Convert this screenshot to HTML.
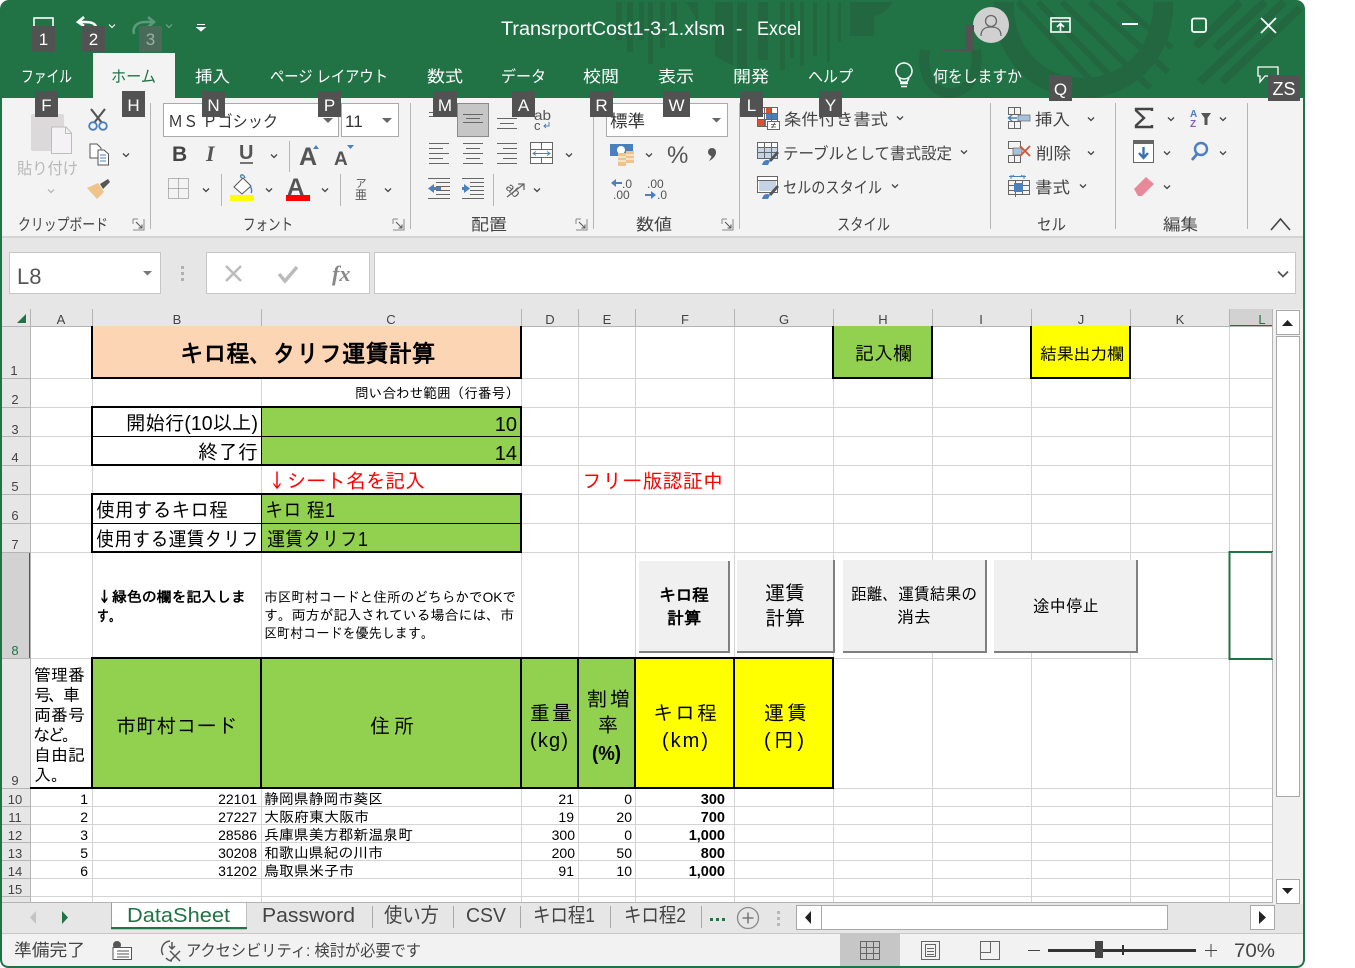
<!DOCTYPE html>
<html lang="ja"><head><meta charset="utf-8"><title>TransrportCost1-3-1.xlsm - Excel</title>
<style>
html,body{margin:0;padding:0;background:#fff;width:1355px;height:968px;overflow:hidden}
svg{display:block;position:absolute;left:0;top:0}
text{white-space:pre}
.u{font-family:"Liberation Sans","Noto Sans CJK JP",sans-serif}
.g{font-family:"Liberation Sans","IPAGothic",sans-serif}
.ar{font-family:"IPAGothic","Liberation Sans",sans-serif}
.tb{font-size:16px;fill:#fff}
.rb{font-size:16px;fill:#444}
.gl{font-size:16px;fill:#444}
.k{font-size:17px;fill:#fff;text-anchor:middle}
.ch{font-size:13px;fill:#444;text-anchor:middle}
.rh{font-size:13px;fill:#444;text-anchor:middle}
.c{fill:#000}
.n{font-size:14px}
.v{stroke:#666;stroke-width:1;fill:none;shape-rendering:crispEdges}
</style></head><body>
<svg width="1355" height="968" viewBox="0 0 1355 968" xmlns="http://www.w3.org/2000/svg">
<defs>
<path id="cv" d="M-3-1.5L0 1.5L3-1.5" fill="none" stroke="#444" stroke-width="1.3"/>
<path id="cw" d="M-3-1.5L0 1.5L3-1.5" fill="none" stroke="#fff" stroke-width="1"/>
<g id="ex"><path d="M-6-6V-1M-6-6H-1M-6 5H5V-6" fill="none" stroke="#888"/><path d="M-3-3L3 3M3-.5V3H-.5" fill="none" stroke="#555"/></g>
</defs>
<!-- window -->
<rect x="0" y="0" width="1305" height="968" rx="9" fill="#217346"/>
<!-- title bar pattern -->
<g fill="#22673f">
<rect x="616" y="2" width="6" height="38"/><rect x="627" y="2" width="6" height="50"/><rect x="639" y="2" width="5" height="38"/><rect x="648" y="2" width="5" height="62"/><rect x="660" y="2" width="5" height="46"/><rect x="671" y="2" width="6" height="28"/>
<path d="M686 2H698V22Z"/><path d="M715 2H733V66L715 56Z"/><rect x="737" y="2" width="10" height="68"/><rect x="758" y="2" width="10" height="58"/><rect x="780" y="2" width="5" height="68"/><rect x="790" y="2" width="4" height="56"/><rect x="800" y="2" width="4" height="64"/><rect x="813" y="2" width="4" height="54"/><rect x="827" y="2" width="3" height="60"/><rect x="838" y="2" width="3" height="40"/>
</g>
<g fill="none" stroke="#22673f">
<path d="M1004 2C1002 50 1035 88 1084 88C1130 88 1165 50 1163 2" stroke-width="20"/>
<path d="M925 50C921 78 935 93 950 93C965 93 980 78 976 50" stroke-width="10"/>
<path d="M1018 2L1098 88M1038 2L1122 88M1062 2L1150 88M1090 2L1168 72M1118 2L1172 48" stroke-width="6"/>
<path d="M1196 46L1240 2M1215 48L1265 2M1200 82L1284 2M1222 82L1300 8" stroke-width="8"/>
</g>
<rect x="850" y="2" width="115" height="47" fill="#217346"/>
<path d="M850 2H892C888 12 878 16 874 16V36H850Z" fill="#22673f"/>
<!-- tabs / title -->
<text class="u" x="501" y="35" font-size="19" fill="#fff" textLength="224" lengthAdjust="spacingAndGlyphs">TransrportCost1-3-1.xlsm</text>
<text class="u" x="736" y="35" font-size="19" fill="#fff">-</text>
<text class="u" x="757" y="35" font-size="19" fill="#fff" textLength="44" lengthAdjust="spacingAndGlyphs">Excel</text>
<g class="u tb">
<text x="21" y="82" textLength="51" lengthAdjust="spacingAndGlyphs">ファイル</text>
<text x="195" y="82" textLength="35" lengthAdjust="spacingAndGlyphs">挿入</text>
<text x="270" y="82" textLength="118" lengthAdjust="spacingAndGlyphs">ページ レイアウト</text>
<text x="427" y="82" textLength="36" lengthAdjust="spacingAndGlyphs">数式</text>
<text x="501" y="82" textLength="45" lengthAdjust="spacingAndGlyphs">データ</text>
<text x="583" y="82" textLength="36" lengthAdjust="spacingAndGlyphs">校閲</text>
<text x="658" y="82" textLength="36" lengthAdjust="spacingAndGlyphs">表示</text>
<text x="733" y="82" textLength="36" lengthAdjust="spacingAndGlyphs">開発</text>
<text x="808" y="82" textLength="45" lengthAdjust="spacingAndGlyphs">ヘルプ</text>
<text x="933" y="82" textLength="89" lengthAdjust="spacingAndGlyphs">何をしますか</text>
</g>
<!-- QAT icons -->
<rect x="34" y="18" width="19" height="12" fill="none" stroke="#fff" stroke-width="1.6"/>
<path d="M96 28C96 23 91 22 85 22H79M84 17L78 22L84 26" fill="none" stroke="#fff" stroke-width="2.6"/>
<use href="#cw" x="112" y="26"/>
<path d="M134 34C132 26 138 22 145 22H153M148 17L154 22L148 27" fill="none" stroke="#5c9a7a" stroke-width="2.6"/>
<use href="#cw" x="169" y="26" opacity=".4"/>
<path d="M197 24.5H205M197 27.5H205L201 31Z" fill="#fff" stroke="#fff" stroke-width="1"/>
<!-- window controls -->
<circle cx="991" cy="25" r="18" fill="#d0d0d0"/><circle cx="991" cy="21" r="5.5" fill="none" stroke="#666" stroke-width="1.3"/><path d="M981 36C981 29 985 27 991 27C997 27 1001 29 1001 36" fill="none" stroke="#666" stroke-width="1.3"/>
<rect x="1051" y="18" width="19" height="14" fill="none" stroke="#fff" stroke-width="1.6"/><path d="M1051 21.5H1070M1060.5 31V24M1057 27L1060.5 23.5L1064 27" fill="none" stroke="#fff" stroke-width="1.6"/>
<path d="M1122 24H1138" stroke="#fff" stroke-width="2"/>
<rect x="1192" y="18.5" width="14" height="13.5" rx="2" fill="none" stroke="#fff" stroke-width="1.8"/>
<path d="M1261 18L1276 33M1276 18L1261 33" stroke="#fff" stroke-width="1.7"/>
<circle cx="904" cy="71" r="8" fill="none" stroke="#fff" stroke-width="1.5"/><path d="M899 78L901 82H907L909 78M900 83.5H908M901 86.5H907" fill="none" stroke="#fff" stroke-width="1.5"/>
<path d="M1258 67H1278V76H1265L1260 82V76H1258Z" fill="none" stroke="#fff" stroke-width="1.3"/>
<!-- ribbon -->
<rect x="2" y="98" width="1301" height="138" fill="#f3f3f3"/>
<rect x="93" y="53" width="82" height="46" fill="#f3f3f3"/>
<text class="u" x="111" y="82" font-size="16" fill="#217346" textLength="45" lengthAdjust="spacingAndGlyphs">ホーム</text>
<rect x="2" y="236" width="1301" height="2" fill="#d4d4d4"/>
<g class="v" style="stroke:#b5b5b5"><path d="M150.500 103V229M410.500 103V229M593.500 103V229M739.500 103V229M990.500 103V229M1115.500 103V229M1247.500 103V229"/>
<path d="M289.500 141V172M221.500 174V206M340.500 174V206M493.500 174V206"/></g>
<!-- clipboard -->
<rect x="31" y="114" width="33" height="37" rx="2" fill="#dcd9da"/>
<path d="M51.500 127H66L71.500 133V153.500H51.500Z" fill="#f5f2f5" stroke="#bdbdbd"/><path d="M65.500 127V133.500H71.500" fill="none" stroke="#bdbdbd"/>
<text class="u" x="17" y="174" font-size="16" fill="#b8b8b8" textLength="61" lengthAdjust="spacingAndGlyphs">貼り付け</text>
<use href="#cv" x="51" y="191" opacity=".35"/>
<path d="M91 109L102 123M105 109L94 123" stroke="#555" stroke-width="2.2"/>
<circle cx="93" cy="126" r="3.8" fill="none" stroke="#4a80bd" stroke-width="1.8"/><circle cx="103" cy="126" r="3.8" fill="none" stroke="#4a80bd" stroke-width="1.8"/>
<path d="M90 144H97L101 148V158H90Z" fill="#fff" stroke="#555"/><path d="M98 150H104L108.500 154V165H98Z" fill="#fff" stroke="#555"/><path d="M100 155H106M100 158H106M100 161H106" stroke="#4a80bd"/>
<use href="#cv" x="126" y="155"/>
<path d="M87 188L98 183L104 192L97 199Z" fill="#eec48b"/><path d="M100 184L108 179L110 182L103 189Z" fill="#555"/>
<text class="u gl" x="18" y="230" textLength="90" lengthAdjust="spacingAndGlyphs">クリップボード</text>
<use href="#ex" x="139" y="225"/>
<!-- font -->
<rect x="163.500" y="103.500" width="175" height="33" fill="#fff" stroke="#aaa"/><rect x="341.500" y="103.500" width="57" height="33" fill="#fff" stroke="#aaa"/>
<text class="u" x="168" y="127" font-size="16" fill="#333" textLength="110" lengthAdjust="spacingAndGlyphs">ＭＳ Ｐゴシック</text>
<path d="M323 118H333L328 123Z" fill="#666"/><path d="M382 118H392L387 123Z" fill="#666"/>
<text class="u" x="345" y="127" font-size="17" fill="#333">11</text>
<text x="172" y="161" font-family="Liberation Sans,sans-serif" font-weight="700" font-size="21" fill="#444">B</text>
<text x="206" y="161" font-family="Liberation Serif,serif" font-style="italic" font-weight="700" font-size="22" fill="#555">I</text>
<text x="239" y="159" font-family="Liberation Sans,sans-serif" font-weight="700" font-size="20" fill="#555">U</text><path d="M240 163H253" stroke="#555" stroke-width="1.600"/>
<use href="#cv" x="274" y="156"/>
<text x="299" y="165" font-family="Liberation Sans,sans-serif" font-weight="700" font-size="25" fill="#555">A</text><path d="M313 149L319 149L316 145Z" fill="#4a80bd"/>
<text x="334" y="165" font-family="Liberation Sans,sans-serif" font-weight="700" font-size="19" fill="#555">A</text><path d="M347 145H354L350.500 149Z" fill="#4a80bd"/>
<path d="M168.500 178.500H188.500V198.500H168.500ZM178.500 178.500V198.500M168.500 188.500H188.500" fill="none" stroke="#777" stroke-dasharray="1 1" shape-rendering="crispEdges"/>
<use href="#cv" x="206" y="190"/>
<path d="M234 187L243 178L251 186L242 194Z" fill="#fff" stroke="#555"/><path d="M242 178C238 176 243 172 245 178M250 186C252 189 252 192 251 193" fill="none" stroke="#4a80bd" stroke-width="1.400"/>
<rect x="230" y="195" width="24" height="6" fill="#ff0"/>
<use href="#cv" x="269" y="190"/>
<text x="287" y="195" font-family="Liberation Sans,sans-serif" font-weight="700" font-size="24" fill="#555">A</text>
<rect x="286" y="195" width="24" height="6" fill="#f00"/>
<use href="#cv" x="325" y="190"/>
<text class="u" x="361" y="187" font-size="11" fill="#555" text-anchor="middle">ア</text><text class="u" x="361" y="199" font-size="12" fill="#555" text-anchor="middle">亜</text>
<use href="#cv" x="388" y="190"/>
<text class="u gl" x="243" y="230" textLength="50" lengthAdjust="spacingAndGlyphs">フォント</text>
<use href="#ex" x="399" y="225"/>
<!-- alignment -->
<path class="v" d="M429 112.500H434M429 116.500H434"/>
<rect x="457.500" y="103.500" width="31" height="33" fill="#c6c6c6" stroke="#8a8a8a"/>
<path class="v" d="M463 114.500H483M466 118.500H480M463 122.500H483"/>
<path class="v" d="M497 118.500H517M500 123.500H514M497 128.500H517"/>
<text class="u" x="534" y="120" font-size="14" fill="#555" textLength="17" lengthAdjust="spacingAndGlyphs">ab</text><text class="u" x="534" y="130" font-size="13" fill="#555">c</text>
<path d="M549 122V126H544M546 124L544 126L546 128" fill="none" stroke="#4a80bd"/>
<path class="v" d="M429 143.500H449M429 148.500H443M429 153.500H449M429 158.500H443M429 163.500H449"/>
<path class="v" d="M463 143.500H483M466 148.500H480M463 153.500H483M466 158.500H480M463 163.500H483"/>
<path class="v" d="M497 143.500H517M503 148.500H517M497 153.500H517M503 158.500H517M497 163.500H517"/>
<rect x="530.500" y="142.500" width="22" height="21" fill="#fff" stroke="#666"/><path class="v" d="M530 149.500H553M530 157.500H553M541.500 142V149M541.500 158V164"/><path d="M533 153.500H550M536 151.500L533 153.500L536 155.500M547 151.500L550 153.500L547 155.500" fill="none" stroke="#4a80bd"/>
<use href="#cv" x="569" y="155"/>
<path class="v" d="M428 178.500H450M436 182.500H450M436 186.500H450M436 190.500H450M436 194.500H450M428 198.500H450"/>
<path d="M428 188.500L434 184V187H441V190H434V193Z" fill="#4a80bd"/>
<path class="v" d="M462 178.500H484M470 182.500H484M470 186.500H484M470 190.500H484M470 194.500H484M462 198.500H484"/>
<path d="M470 188.500L464 184V187H462V190H464V193Z" fill="#4a80bd"/>
<text class="u" font-size="13" fill="#555" transform="translate(508,191) rotate(45)" x="-4" y="0">ab</text>
<path d="M507 197L524 184M518 184H524V190" fill="none" stroke="#666" stroke-width="1.300"/>
<use href="#cv" x="537" y="190"/>
<text class="u gl" x="471" y="230" textLength="36" lengthAdjust="spacingAndGlyphs">配置</text>
<use href="#ex" x="582" y="225"/>
<!-- number -->
<rect x="606.500" y="103.500" width="121" height="33" fill="#fff" stroke="#aaa"/>
<text class="u" x="610" y="127" font-size="17" fill="#333" textLength="35" lengthAdjust="spacingAndGlyphs">標準</text>
<path d="M712 118H721L716.500 122.500Z" fill="#666"/>
<rect x="610" y="144" width="23" height="12" fill="#4a80bd"/><circle cx="621" cy="150" r="4" fill="#fff"/>
<rect x="618" y="153" width="8" height="13" fill="#eec48b"/><rect x="626" y="151" width="8" height="12" fill="#eec48b"/><path d="M618 157H626M618 161H626M626 155H634M626 159H634" stroke="#fff"/>
<use href="#cv" x="649" y="155"/>
<text x="667" y="163" font-family="Liberation Sans,sans-serif" font-size="24" fill="#555">%</text>
<circle cx="712" cy="152" r="4" fill="#555"/><path d="M716 152C716 156 713 159 709 161C711 158 712 156 711 155Z" fill="#555"/>
<path d="M611 183L616 179V182H622V184H616V187Z" fill="#4a80bd"/>
<text class="u" x="622" y="188" font-size="12" fill="#555">.0</text><text class="u" x="613" y="199" font-size="12" fill="#555">.00</text>
<text class="u" x="647" y="188" font-size="12" fill="#555">.00</text>
<path d="M656 195L651 191V194H645V196H651V199Z" fill="#4a80bd"/>
<text class="u" x="657" y="199" font-size="12" fill="#555">.0</text>
<text class="u gl" x="636" y="230" textLength="36" lengthAdjust="spacingAndGlyphs">数値</text>
<use href="#ex" x="728" y="225"/>
<!-- styles -->
<rect x="757.500" y="107.500" width="20" height="19" fill="#fff" stroke="#666"/><rect x="766" y="108" width="5" height="6" fill="#d4552f"/><rect x="766" y="114" width="11" height="5" fill="#4a80bd"/><rect x="758" y="120" width="8" height="6" fill="#d4552f"/><path class="v" d="M764.500 107V127M771.500 107V127M757 113.500H778M757 119.500H778"/>
<rect x="767.500" y="121.500" width="12" height="8" fill="#fff" stroke="#666"/><path d="M771 124.500H776M771 127H776M775 122.500L772 128" stroke="#555" fill="none" stroke-width=".8"/>
<text class="u rb" x="784" y="125" textLength="104" lengthAdjust="spacingAndGlyphs">条件付き書式</text><use href="#cv" x="900" y="118"/>
<rect x="757.500" y="142.500" width="20" height="16" fill="#fff" stroke="#666"/><rect x="758" y="147" width="19" height="11" fill="#c4d4e6"/><path class="v" d="M764.500 142V158M771.500 142V158M757 147.500H778M757 152.500H778"/>
<path d="M769 160L777 151L779 153L771 162Z" fill="#555"/><path d="M762 165C763 160 767 159 770 161L768 165Z" fill="#4a80bd"/>
<text class="u rb" x="783" y="159" textLength="169" lengthAdjust="spacingAndGlyphs">テーブルとして書式設定</text><use href="#cv" x="964" y="152"/>
<rect x="757.500" y="176.500" width="20" height="16" fill="#fff" stroke="#666"/><rect x="759" y="181" width="17" height="10" fill="#c4d4e6"/><path class="v" d="M757 180.500H778"/>
<path d="M769 194L777 185L779 187L771 196Z" fill="#555"/><path d="M762 199C763 194 767 193 770 195L768 199Z" fill="#4a80bd"/>
<text class="u rb" x="783" y="193" textLength="99" lengthAdjust="spacingAndGlyphs">セルのスタイル</text><use href="#cv" x="895" y="186"/>
<text class="u gl" x="837" y="230" textLength="53" lengthAdjust="spacingAndGlyphs">スタイル</text>
<!-- cells -->
<path class="v" d="M1008.500 107.500H1020.500V114.500H1008.500ZM1014.500 107V114M1008.500 121.500H1020.500V128.500H1008.500ZM1014.500 122V128"/><rect x="1018" y="115" width="12" height="6" fill="#a9c2dc" stroke="#666" stroke-width=".7"/><path d="M1008 118H1017M1012 115L1008.500 118L1012 121" fill="none" stroke="#4a80bd" stroke-width="1.400"/>
<text class="u rb" x="1035" y="125" textLength="35" lengthAdjust="spacingAndGlyphs">挿入</text><use href="#cv" x="1091" y="119"/>
<path class="v" d="M1008.500 141.500H1020.500V148.500H1008.500ZM1008.500 155.500H1020.500V162.500H1008.500ZM1014.500 155V162"/><rect x="1013" y="148" width="9" height="7" fill="#a9c2dc" stroke="#666" stroke-width=".7"/><path d="M1020 146L1030 156M1030 146L1020 156" stroke="#d4552f" stroke-width="1.800"/>
<text class="u rb" x="1036" y="159" textLength="35" lengthAdjust="spacingAndGlyphs">削除</text><use href="#cv" x="1091" y="153"/>
<path d="M1009 176.500H1026M1011 175V179M1024 175V179M1012 176.500L1014 175M1023 176.500L1021 175" fill="none" stroke="#4a80bd"/>
<path class="v" d="M1008.500 180.500H1029.500V194.500H1008.500ZM1015.500 180V197M1022.500 180V194M1008 185.500H1030M1008 190.500H1030"/><rect x="1014" y="183" width="9" height="9" fill="#4a80bd"/>
<text class="u rb" x="1035" y="193" textLength="35" lengthAdjust="spacingAndGlyphs">書式</text><use href="#cv" x="1083" y="186"/>
<text class="u gl" x="1037" y="230" textLength="29" lengthAdjust="spacingAndGlyphs">セル</text>
<!-- editing -->
<path d="M1152 111V109H1136V110.500L1144 118L1136 125.500V127H1152V125" fill="none" stroke="#444" stroke-width="2.400"/>
<use href="#cv" x="1171" y="119"/>
<text x="1190" y="117" font-family="Liberation Sans,sans-serif" font-size="10" font-weight="700" fill="#4a80bd">A</text><text x="1190" y="127" font-family="Liberation Sans,sans-serif" font-size="10" font-weight="700" fill="#8a5fb5">Z</text>
<path d="M1201 113H1211L1207.500 118V125H1204.500V118Z" fill="#555"/>
<use href="#cv" x="1223" y="119"/>
<rect x="1133.500" y="140.500" width="20" height="22" fill="#fff" stroke="#666"/><rect x="1133" y="140" width="21" height="4" fill="#666"/><path d="M1143.500 147V158M1139 153L1143.500 158L1148 153" fill="none" stroke="#3a70b0" stroke-width="2.400"/>
<use href="#cv" x="1167" y="153"/>
<circle cx="1201" cy="149" r="6" fill="none" stroke="#4a80bd" stroke-width="2.400"/><path d="M1197 154L1192 160" stroke="#4a80bd" stroke-width="2.800"/>
<use href="#cv" x="1223" y="153"/>
<path d="M1134 189L1146 177L1154 184L1142 196L1138 196Z" fill="#e8899a"/><use href="#cv" x="1167" y="187"/>
<text class="u gl" x="1163" y="230" textLength="35" lengthAdjust="spacingAndGlyphs">編集</text>
<path d="M1271 230L1280.500 219L1290 230" fill="none" stroke="#444" stroke-width="1.600"/>
<!-- formula bar -->
<rect x="2" y="238" width="1301" height="71" fill="#e6e6e6"/>
<rect x="9.500" y="252.500" width="151" height="41" fill="#fff" stroke="#c6c6c6"/>
<text class="u" x="17" y="284" font-size="22" fill="#555">L8</text>
<path d="M143 271H152L147.500 275.500Z" fill="#777"/>
<path d="M181 266H184V269H181ZM181 272H184V275H181ZM181 278H184V281H181Z" fill="#b0b0b0"/>
<rect x="206.500" y="252.500" width="163" height="41" fill="#fff" stroke="#c6c6c6"/>
<path d="M226 266L241 281M241 266L226 281" stroke="#bbb" stroke-width="2.500"/>
<path d="M279 274L285 281L297 267" fill="none" stroke="#bbb" stroke-width="3.500"/>
<text x="332" y="281" font-family="Liberation Serif,serif" font-style="italic" font-weight="700" font-size="22" fill="#888">fx</text>
<rect x="374.500" y="252.500" width="921" height="41" fill="#fff" stroke="#c6c6c6"/>
<path d="M1278 271.500L1283 276.500L1288 271.500" fill="none" stroke="#555" stroke-width="1.800"/>
<!-- grid -->
<rect x="30" y="326" width="1243" height="576" fill="#fff"/>
<rect x="2" y="309" width="1271" height="17" fill="#e6e6e6"/>
<rect x="2" y="326" width="28" height="576" fill="#e6e6e6"/>
<rect x="1229" y="309" width="44" height="17" fill="#d2d2d2"/><rect x="1229" y="325" width="44" height="2" fill="#217346"/>
<rect x="2" y="552" width="28" height="106" fill="#d2d2d2"/><rect x="29" y="552" width="2" height="107" fill="#217346"/>
<path d="M26 314V323H17Z" fill="#217346"/>
<path d="M30 378.500H1272M30 407.500H1272M30 436.500H1272M30 465.500H1272M30 494.500H1272M30 523.500H1272M30 552.500H1272M30 658.500H1272M30 788.500H1272M30 806.500H1272M30 824.500H1272M30 842.500H1272M30 860.500H1272M30 878.500H1272M30 896.500H1272M92.500 326V902M261.500 326V902M521.500 326V902M578.500 326V902M635.500 326V902M734.500 326V902M833.500 326V902M932.500 326V902M1031.500 326V902M1130.500 326V902M1229.500 326V902" stroke="#d4d4d4" fill="none" shape-rendering="crispEdges"/>
<path d="M2 378.500H30M2 407.500H30M2 436.500H30M2 465.500H30M2 494.500H30M2 523.500H30M2 552.500H30M2 658.500H30M2 788.500H30M2 806.500H30M2 824.500H30M2 842.500H30M2 860.500H30M2 878.500H30M2 896.500H30M30.500 309V902M92.500 309V326M261.500 309V326M521.500 309V326M578.500 309V326M635.500 309V326M734.500 309V326M833.500 309V326M932.500 309V326M1031.500 309V326M1130.500 309V326M1229.500 309V326M2 326.500H1272M1272.500 309V902M2 902.500H1273" stroke="#b4b4b4" fill="none" shape-rendering="crispEdges"/>
<g class="g ch">
<text x="61" y="324">A</text><text x="177" y="324">B</text><text x="391" y="324">C</text><text x="550" y="324">D</text><text x="607" y="324">E</text><text x="685" y="324">F</text><text x="784" y="324">G</text><text x="883" y="324">H</text><text x="981" y="324">I</text><text x="1081" y="324">J</text><text x="1180" y="324">K</text><text x="1262" y="324" style="fill:#217346">L</text>
</g>
<g class="g rh">
<text x="14" y="375">1</text><text x="15" y="404">2</text><text x="15" y="434">3</text><text x="15" y="462">4</text><text x="15" y="491">5</text><text x="15" y="520">6</text><text x="15" y="549">7</text><text x="15" y="655" style="fill:#217346">8</text><text x="15" y="785">9</text>
<text x="15" y="804">10</text><text x="15" y="822">11</text><text x="15" y="840">12</text><text x="15" y="858">13</text><text x="15" y="876">14</text><text x="15" y="894">15</text>
</g>
<!-- filled cells -->
<rect x="92" y="326" width="429" height="52" fill="#fcd5b4"/>
<rect x="833" y="326" width="99" height="52" fill="#92d050"/>
<rect x="1031" y="326" width="99" height="52" fill="#ff0"/>
<rect x="262" y="407" width="259" height="58" fill="#92d050"/>
<rect x="262" y="494" width="259" height="58" fill="#92d050"/>
<rect x="92" y="658" width="543" height="130" fill="#92d050"/>
<rect x="635" y="658" width="198" height="130" fill="#ff0"/>
<g fill="#000" shape-rendering="crispEdges">
<rect x="91" y="326" width="2" height="53"/><rect x="520" y="326" width="2" height="53"/><rect x="91" y="377" width="431" height="2"/>
<rect x="832" y="326" width="2" height="53"/><rect x="931" y="326" width="2" height="53"/><rect x="832" y="377" width="101" height="2"/>
<rect x="1030" y="326" width="2" height="53"/><rect x="1129" y="326" width="2" height="53"/><rect x="1030" y="377" width="101" height="2"/>
<rect x="91" y="406" width="431" height="2"/><rect x="91" y="464" width="431" height="2"/><rect x="91" y="406" width="2" height="60"/><rect x="520" y="406" width="2" height="60"/><rect x="93" y="436" width="427" height="1"/><rect x="261" y="408" width="1" height="56"/>
<rect x="91" y="493" width="431" height="2"/><rect x="91" y="551" width="431" height="2"/><rect x="91" y="493" width="2" height="60"/><rect x="520" y="493" width="2" height="60"/><rect x="93" y="523" width="427" height="1"/><rect x="261" y="495" width="1" height="56"/>
<rect x="91" y="657" width="743" height="2"/><rect x="91" y="787" width="743" height="2"/>
<rect x="91" y="657" width="2" height="132"/><rect x="260" y="657" width="2" height="132"/><rect x="520" y="657" width="2" height="132"/><rect x="577" y="657" width="2" height="132"/><rect x="634" y="657" width="2" height="132"/><rect x="733" y="657" width="2" height="132"/><rect x="832" y="657" width="2" height="132"/>
<rect x="30" y="787" width="62" height="2"/>
</g>
<!-- selection -->
<rect x="1229.500" y="552" width="43" height="107" fill="none" stroke="#217346" stroke-width="2"/>
<rect x="1272" y="552" width="1" height="107" fill="#b4b4b4"/>
<!-- cell text -->
<g class="g c">
<text x="180" y="362" font-size="24" font-weight="700" textLength="255" lengthAdjust="spacingAndGlyphs">キロ程、タリフ運賃計算</text>
<text x="355" y="398" font-size="14" textLength="164" lengthAdjust="spacingAndGlyphs">問い合わせ範囲（行番号）</text>
<text x="126" y="430" font-size="20" textLength="132" lengthAdjust="spacingAndGlyphs">開始行(10以上)</text>
<text x="517" y="431" font-size="20" text-anchor="end">10</text>
<text x="198" y="459" font-size="20" textLength="60" lengthAdjust="spacingAndGlyphs">終了行</text>
<text x="517" y="460" font-size="20" text-anchor="end">14</text>
<text class="ar" x="267" y="488" font-size="20" style="fill:#f00" textLength="158" lengthAdjust="spacing">↓シート名を記入</text>
<text x="582" y="488" font-size="20" style="fill:#f00" textLength="141" lengthAdjust="spacing">フリー版認証中</text>
<text x="96" y="517" font-size="20" textLength="132" lengthAdjust="spacingAndGlyphs">使用するキロ程</text>
<text x="265" y="517" font-size="20" textLength="70" lengthAdjust="spacingAndGlyphs">キロ 程1</text>
<text x="96" y="546" font-size="20" textLength="163" lengthAdjust="spacingAndGlyphs">使用する運賃タリフ</text>
<text x="267" y="546" font-size="20" textLength="101" lengthAdjust="spacingAndGlyphs">運賃タリフ1</text>
<text x="855" y="360" font-size="19" textLength="57" lengthAdjust="spacing">記入欄</text>
<text x="1040" y="360" font-size="17" textLength="84" lengthAdjust="spacing">結果出力欄</text>
<text class="ar" x="97" y="602" font-size="14.500" font-weight="700" textLength="149" lengthAdjust="spacingAndGlyphs">↓緑色の欄を記入しま</text>
<text x="97" y="621" font-size="14.500" font-weight="700" textLength="24" lengthAdjust="spacingAndGlyphs">す。</text>
<text x="264" y="602" font-size="14" textLength="252" lengthAdjust="spacingAndGlyphs">市区町村コードと住所のどちらかでOKで</text>
<text x="264" y="620" font-size="14" textLength="250" lengthAdjust="spacingAndGlyphs">す。両方が記入されている場合には、市</text>
<text x="264" y="638" font-size="14" textLength="170" lengthAdjust="spacingAndGlyphs">区町村コードを優先します。</text>
<text x="34" y="681" font-size="17" textLength="51" lengthAdjust="spacing">管理番</text>
<text x="34" y="701" font-size="17" textLength="46" lengthAdjust="spacing">号、車</text>
<text x="34" y="721" font-size="17" textLength="51" lengthAdjust="spacing">両番号</text>
<text x="33" y="741" font-size="17" textLength="46" lengthAdjust="spacing">など。</text>
<text x="34" y="761" font-size="17" textLength="51" lengthAdjust="spacing">自由記</text>
<text x="34" y="781" font-size="17" textLength="34" lengthAdjust="spacing">入。</text>
<text x="116" y="733" font-size="20" textLength="121" lengthAdjust="spacing">市町村コード</text>
<text x="370" y="733" font-size="20" textLength="44" lengthAdjust="spacing">住所</text>
<text x="530" y="720" font-size="20" textLength="42" lengthAdjust="spacing">重量</text>
<text x="530" y="747" font-size="20" textLength="38" lengthAdjust="spacing">(kg)</text>
<text x="587" y="706" font-size="20" textLength="43" lengthAdjust="spacing">割増</text>
<text x="598" y="732" font-size="20">率</text>
<text x="592" y="760" font-size="20" font-weight="700" textLength="29" lengthAdjust="spacingAndGlyphs">(%)</text>
<text x="653" y="720" font-size="20" textLength="64" lengthAdjust="spacing">キロ程</text>
<text x="662" y="747" font-size="20" textLength="46" lengthAdjust="spacing">(km)</text>
<text x="764" y="720" font-size="20" textLength="43" lengthAdjust="spacing">運賃</text>
<text x="764" y="747" font-size="20" textLength="40" lengthAdjust="spacing">(円)</text>
<g font-size="14" text-anchor="end">
<text x="88" y="804">1</text><text x="88" y="822">2</text><text x="88" y="840">3</text><text x="88" y="858">5</text><text x="88" y="876">6</text>
<text x="257" y="804">22101</text><text x="257" y="822">27227</text><text x="257" y="840">28586</text><text x="257" y="858">30208</text><text x="257" y="876">31202</text>
<text x="574" y="804">21</text><text x="574" y="822">19</text><text x="575" y="840">300</text><text x="575" y="858">200</text><text x="574" y="876">91</text>
<text x="632" y="804">0</text><text x="632" y="822">20</text><text x="632" y="840">0</text><text x="632" y="858">50</text><text x="632" y="876">10</text>
</g>
<g font-size="14.500" text-anchor="end" font-weight="700">
<text x="725" y="804">300</text><text x="725" y="822">700</text><text x="725" y="840">1,000</text><text x="725" y="858">800</text><text x="725" y="876">1,000</text>
</g>
<g font-size="14.500">
<text x="264" y="804" textLength="119" lengthAdjust="spacingAndGlyphs">静岡県静岡市葵区</text>
<text x="264" y="822" textLength="105" lengthAdjust="spacingAndGlyphs">大阪府東大阪市</text>
<text x="264" y="840" textLength="149" lengthAdjust="spacingAndGlyphs">兵庫県美方郡新温泉町</text>
<text x="264" y="858" textLength="119" lengthAdjust="spacingAndGlyphs">和歌山県紀の川市</text>
<text x="264" y="876" textLength="90" lengthAdjust="spacingAndGlyphs">鳥取県米子市</text>
</g>
</g>
<!-- buttons -->
<g shape-rendering="crispEdges">
<rect x="639" y="561" width="91" height="92" fill="#808080"/><rect x="639" y="561" width="89" height="90" fill="#f0f0f0"/>
<rect x="737" y="560" width="98" height="93" fill="#808080"/><rect x="737" y="560" width="96" height="91" fill="#f0f0f0"/>
<rect x="843" y="560" width="144" height="93" fill="#808080"/><rect x="843" y="560" width="142" height="91" fill="#f0f0f0"/>
<rect x="994" y="560" width="144" height="93" fill="#808080"/><rect x="994" y="560" width="142" height="91" fill="#f0f0f0"/>
</g>
<g class="g c" text-anchor="middle">
<text x="659" y="601" font-size="17" font-weight="700" textLength="50" lengthAdjust="spacing" text-anchor="start">キロ程</text>
<text x="684" y="624" font-size="17" font-weight="700">計算</text>
<text x="785" y="600" font-size="20">運賃</text>
<text x="785" y="625" font-size="20">計算</text>
<text x="851" y="600" font-size="17" text-anchor="start" textLength="126" lengthAdjust="spacingAndGlyphs">距離、運賃結果の</text>
<text x="914" y="623" font-size="17">消去</text>
<text x="1033" y="612" font-size="17" text-anchor="start" textLength="66" lengthAdjust="spacingAndGlyphs">途中停止</text>
</g>
<!-- v scrollbar -->
<rect x="1273" y="309" width="30" height="625" fill="#f0f0f0"/>
<rect x="1276.500" y="310.500" width="23" height="24" fill="#fff" stroke="#a8a8a8"/><path d="M1282 326H1293L1287.500 320Z" fill="#222"/>
<rect x="1276.500" y="336.500" width="23" height="460" fill="#fff" stroke="#a8a8a8"/>
<rect x="1276.500" y="879.500" width="23" height="24" fill="#fff" stroke="#a8a8a8"/><path d="M1282 888H1293L1287.500 894Z" fill="#222"/>
<!-- tabs row -->
<rect x="2" y="903" width="1271" height="31" fill="#e6e6e6"/>
<rect x="1273" y="904" width="30" height="30" fill="#e6e6e6"/>
<path d="M36 911V924L30 917.500Z" fill="#c4c4c4"/><path d="M62 911V924L68 917.500Z" fill="#217346"/>
<path d="M111.500 903V929H246V903" fill="#fff" stroke="#9c9c9c"/><rect x="112" y="903" width="134" height="25" fill="#fff"/>
<rect x="111" y="927" width="136" height="2" fill="#217346"/>
<path d="M2 902.500H111M246 902.500H1273" stroke="#b4b4b4"/>
<text class="u" x="127" y="922" font-size="20" fill="#217346" textLength="103" lengthAdjust="spacingAndGlyphs">DataSheet</text>
<g class="u" font-size="20" fill="#444">
<text x="262" y="922" textLength="93" lengthAdjust="spacingAndGlyphs">Password</text>
<text x="384" y="922" textLength="55" lengthAdjust="spacingAndGlyphs">使い方</text>
<text x="466" y="922" textLength="40" lengthAdjust="spacingAndGlyphs">CSV</text>
<text x="533" y="922" textLength="62" lengthAdjust="spacingAndGlyphs">キロ程1</text>
<text x="624" y="922" textLength="62" lengthAdjust="spacingAndGlyphs">キロ程2</text>
</g>
<path d="M372.500 906V928M453.500 906V928M520.500 906V928M610.500 906V928M701.500 906V928" stroke="#a8a8a8" shape-rendering="crispEdges"/>
<path d="M710 918H713V921H710ZM716 918H719V921H716ZM722 918H725V921H722Z" fill="#217346"/>
<circle cx="748" cy="918" r="10.500" fill="none" stroke="#888" stroke-width="1.300"/><path d="M748 912.500V923.500M742.500 918H753.500" stroke="#666" stroke-width="1.300"/>
<path d="M777 911H780V914H777ZM777 917H780V920H777ZM777 923H780V926H777Z" fill="#b8b8b8"/>
<rect x="796.500" y="905.500" width="25" height="24" fill="#fff" stroke="#a8a8a8"/><path d="M811 911V924L805 917.500Z" fill="#222"/>
<rect x="821.500" y="905.500" width="346" height="24" fill="#fff" stroke="#a8a8a8"/>
<rect x="1250.500" y="905.500" width="24" height="24" fill="#fff" stroke="#a8a8a8"/><path d="M1259 911V924L1266 917.500Z" fill="#222"/>
<!-- status bar -->
<rect x="2" y="934" width="1301" height="32" fill="#f2f2f2"/><path d="M2 933.500H1303" stroke="#c8c8c8"/>
<text class="u" x="14" y="956" font-size="17" fill="#444" textLength="71" lengthAdjust="spacingAndGlyphs">準備完了</text>
<circle cx="117" cy="945" r="4" fill="#555"/><path d="M113 947.500H131.500V959.500H113ZM117 951H129M117 954H129M117 957H129" fill="#fff" stroke="#555"/>
<path d="M170 941C162 942 160 950 163 955M172 942V949M169 946L172 949L175 946M170 951L180 961M180 951L170 961M166 958C168 960 170 961 172 961" fill="none" stroke="#555" stroke-width="1.500"/>
<text class="u" x="186" y="956" font-size="16" fill="#444" textLength="235" lengthAdjust="spacingAndGlyphs">アクセシビリティ: 検討が必要です</text>
<rect x="840" y="934" width="60" height="32" fill="#c6c6c6"/>
<path d="M860.500 941.500H879.500V959.500H860.500ZM866.500 941.500V959.500M873.500 941.500V959.500M860.500 947.500H879.500M860.500 953.500H879.500" fill="none" stroke="#666" shape-rendering="crispEdges"/>
<path d="M921.500 941.500H939.500V959.500H921.500ZM925.500 944.500H935.500V956.500H925.500ZM927 948.500H934M927 951.500H934M927 954.500H934" fill="none" stroke="#666" shape-rendering="crispEdges"/>
<path d="M980.500 941.500H999.500V959.500H980.500ZM980.500 952.500H990.500V941.500" fill="none" stroke="#666" shape-rendering="crispEdges"/>
<path d="M1028 950.500H1040" stroke="#444" stroke-width="1"/>
<rect x="1048" y="949" width="148" height="3" fill="#333"/><rect x="1095" y="941" width="8" height="17" fill="#444"/><rect x="1122" y="945" width="2" height="10" fill="#333"/>
<path d="M1205 950.500H1217M1211 944V957" stroke="#444"/>
<text class="u" x="1234" y="957" font-size="19" fill="#444" textLength="41" lengthAdjust="spacingAndGlyphs">70%</text>
<!-- side green edges -->
<rect x="0" y="98" width="2" height="862" fill="#217346"/><rect x="1303" y="98" width="2" height="862" fill="#217346"/>
<path d="M0 959C0 964 4 968 9 968H0ZM1305 959C1305 964 1301 968 1296 968H1305Z" fill="#fff"/>
<path d="M1 959C1 964 4 967 9 967H1296C1301 967 1304 964 1304 959" fill="none" stroke="#217346" stroke-width="2"/>
<!-- key tips -->
<g fill="#525252">
<rect x="32" y="26" width="23" height="26"/><rect x="82" y="26" width="23" height="26"/><rect x="139" y="26" width="23" height="26" fill="#4a6b5a"/>
<rect x="35" y="91" width="23" height="26"/><rect x="122" y="91" width="23" height="26"/><rect x="202" y="91" width="23" height="26"/><rect x="318" y="91" width="23" height="26"/><rect x="433" y="91" width="24" height="26"/><rect x="512" y="91" width="23" height="26"/><rect x="590" y="91" width="23" height="26"/><rect x="663" y="91" width="27" height="26"/><rect x="740" y="91" width="23" height="26"/><rect x="819" y="91" width="23" height="26"/>
<rect x="1049" y="75" width="23" height="26"/><rect x="1268" y="75" width="32" height="26"/>
<path d="M965 25H974V51H942V49H965Z"/>
</g>
<g class="u k">
<text x="43.500" y="45">1</text><text x="93.500" y="45">2</text><text x="150.500" y="45" opacity=".45">3</text>
<text x="46.500" y="111">F</text><text x="133.500" y="111">H</text><text x="213.500" y="111">N</text><text x="329.500" y="111">P</text><text x="445" y="111">M</text><text x="523.500" y="111">A</text><text x="601.500" y="111">R</text><text x="676.500" y="111">W</text><text x="751.500" y="111">L</text><text x="830.500" y="111">Y</text>
<text x="1060.500" y="95">Q</text><text x="1284" y="95" font-size="18">ZS</text>
</g>
</svg>
</body></html>
